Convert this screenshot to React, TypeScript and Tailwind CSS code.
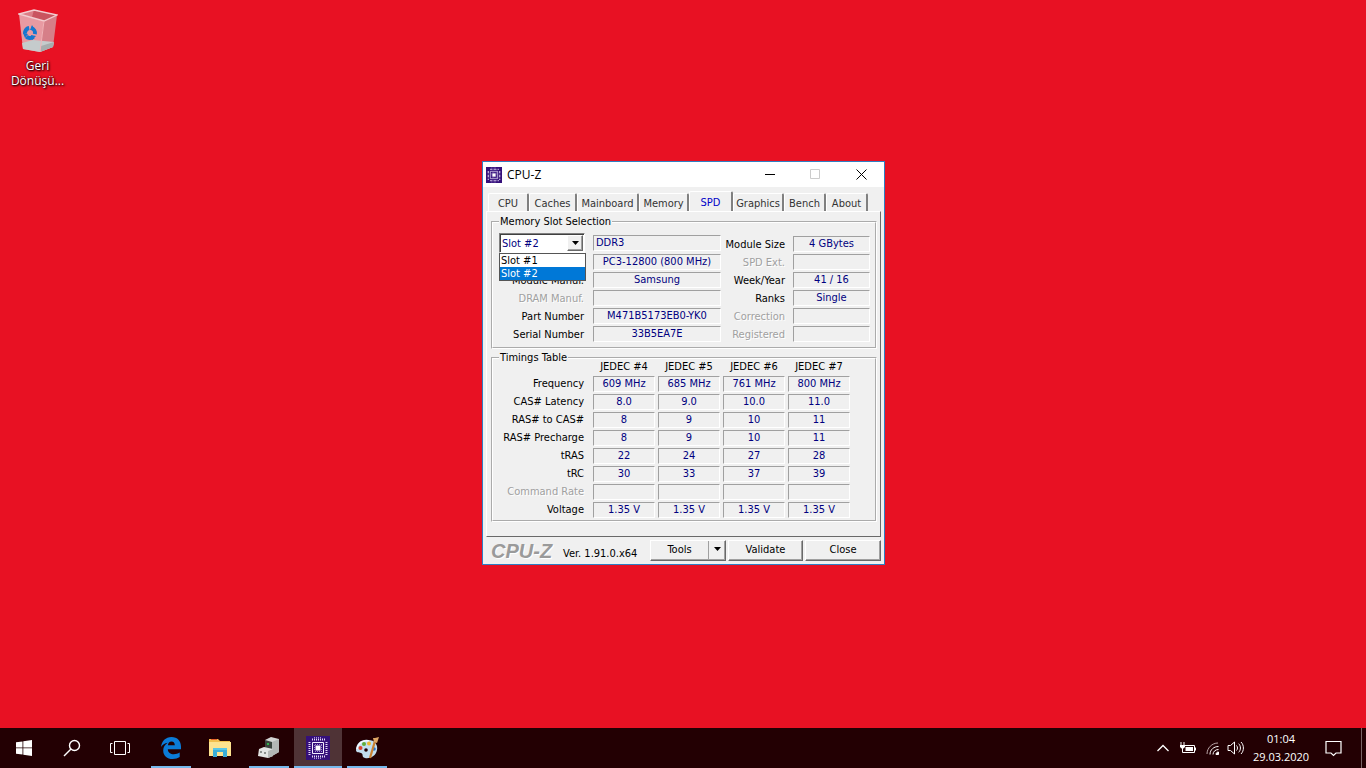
import { useState } from 'react';
import type { ReactNode } from 'react';
import clsx from 'clsx';

const TABS = [
  { name: 'CPU', width: 'w-[41px]' },
  { name: 'Caches', width: 'w-12' },
  { name: 'Mainboard', width: 'w-[62px]' },
  { name: 'Memory', width: 'w-[50px]' },
  { name: 'SPD', width: 'w-11' },
  { name: 'Graphics', width: 'w-[51px]' },
  { name: 'Bench', width: 'w-[42px]' },
  { name: 'About', width: 'w-[42px]' },
];

const SLOTS = ['Slot #1', 'Slot #2'];

const MODULE_ROWS = [
  { label: '', value: 'PC3-12800 (800 MHz)' },
  { label: 'Module Manuf.', value: 'Samsung' },
  { label: 'DRAM Manuf.', value: '' },
  { label: 'Part Number', value: 'M471B5173EB0-YK0' },
  { label: 'Serial Number', value: '33B5EA7E' },
];

const DETAIL_ROWS = [
  { label: 'Module Size', value: '4 GBytes' },
  { label: 'SPD Ext.', value: '' },
  { label: 'Week/Year', value: '41 / 16' },
  { label: 'Ranks', value: 'Single' },
  { label: 'Correction', value: '' },
  { label: 'Registered', value: '' },
];

const PROFILES = ['JEDEC #4', 'JEDEC #5', 'JEDEC #6', 'JEDEC #7'];

const TIMINGS = [
  { label: 'Frequency', values: ['609 MHz', '685 MHz', '761 MHz', '800 MHz'] },
  { label: 'CAS# Latency', values: ['8.0', '9.0', '10.0', '11.0'] },
  { label: 'RAS# to CAS#', values: ['8', '9', '10', '11'] },
  { label: 'RAS# Precharge', values: ['8', '9', '10', '11'] },
  { label: 'tRAS', values: ['22', '24', '27', '28'] },
  { label: 'tRC', values: ['30', '33', '37', '39'] },
  { label: 'Command Rate', values: ['', '', '', ''] },
  { label: 'Voltage', values: ['1.35 V', '1.35 V', '1.35 V', '1.35 V'] },
];

const sunken = 'border border-t-[#a0a0a0] border-l-[#a0a0a0] border-r-white border-b-white';
const raised =
  'border border-t-white border-l-white border-r-[#696969] border-b-[#696969] shadow-[inset_-1px_-1px_0_#a0a0a0]';

function ChipIcon({ size }: { size: number }) {
  return (
    <svg width={size} height={size} viewBox="0 0 24 24" aria-hidden="true">
      <rect width="24" height="24" fill="#35107a" />
      <path
        d="M6 3.500h13M6 20.500h13M3.500 6v13M20.500 6v13"
        stroke="#e6dcf8"
        strokeWidth="2"
        strokeDasharray="1 1"
      />
      <path d="M8 1.500h8M8 22.500h8" stroke="#a890d6" strokeDasharray="1 1" />
      <path d="M6.500 6.500h11v11h-11z" fill="none" stroke="#f4eeff" />
      <path d="M9 8.500h7M9 15.500h7M8.500 9v6M15.500 9v6" stroke="#9f86d0" strokeDasharray="1 1" />
      <path d="M9.500 9.500h5v5h-5z" fill="#fff" />
    </svg>
  );
}

function RecycleBin() {
  return (
    <svg width="40" height="44" viewBox="0 0 40 44" aria-hidden="true">
      <path d="M1 5 26 12l-4 31L5 40z" fill="#e89aa2" />
      <path d="M26 12 39 6l-4 32-13 5z" fill="#d67f88" />
      <path d="M1 5 16 1l23 5-13 6z" fill="#c9545f" />
      <path d="M16 1 14 8 1 5z" fill="#dc7d86" />
      <path d="m4 34 11-3 21 2-1 5-13 5-17-3z" fill="#c5cbcc" />
      <path d="m23 37 13-4-1 5-13 5z" fill="#a7acad" />
      <path d="M1 5 16 1l23 5-13 6z" fill="none" stroke="#f3cdd0" strokeWidth="1.3" />
      <path d="M26 12l-4 31" stroke="#efb4b9" />
      <circle
        cx="12"
        cy="24"
        r="5"
        fill="none"
        stroke="#1677cf"
        strokeWidth="4"
        strokeDasharray="7.5 2.972"
        transform="rotate(-75 12 24)"
      />
      <path d="m14 16 3 5h-5zM5 24l5 1-3 4zM18 27l-4 4-1-5z" fill="#1677cf" />
    </svg>
  );
}

function WindowsIcon() {
  return (
    <svg width="16" height="16" viewBox="0 0 16 16" fill="#fff" aria-hidden="true">
      <path d="M0 2.300 6.500 1.400v6.100H0zM7.300 1.300 16 0v7.500H7.300zM0 8.300h6.500v6.300L0 13.700zM7.300 8.300H16V16l-8.700-1.200z" />
    </svg>
  );
}

function SearchIcon() {
  return (
    <svg width="18" height="18" viewBox="0 0 18 18" fill="none" stroke="#fff" strokeWidth="1.4" aria-hidden="true">
      <circle cx="11.5" cy="6.5" r="5" />
      <path d="m8 10-7 7" />
    </svg>
  );
}

function TaskViewIcon() {
  return (
    <svg width="20" height="16" viewBox="0 0 20 16" fill="none" stroke="#fff" strokeWidth="1" aria-hidden="true">
      <path d="M4.500 1.500h11v13h-11zM2.500 3.500h-2v9h2M17.500 3.500h2v9h-2" />
    </svg>
  );
}

function EdgeIcon() {
  return (
    <svg width="20" height="22" viewBox="0 0 20 22" fill="#0b7bd8" aria-hidden="true">
      <path d="M0 10C.6 4.200 4.600 0 10.500 0 16.500 0 20 4.200 20 9.600v2.600H6.800c.2 3.300 2.700 5 6 5 2.300 0 4.100-.6 5.900-1.700v4.600C16.800 21.300 14.600 22 11.700 22 6.100 22 2.200 18.700 2.200 13.400c0-3.400 1.800-6 4.500-7.700C3.800 6.200 1.300 7.600 0 10zm6.900-1.700h6.900c0-2.300-1.100-3.700-3.300-3.700S7.200 6 6.900 8.300z" />
    </svg>
  );
}

function ExplorerIcon() {
  return (
    <svg width="22" height="20" viewBox="0 0 22 20" aria-hidden="true">
      <path d="M0 3V1h9l2 2h10v15H0z" fill="#f2bf4d" />
      <path d="M0 4h22v14H0z" fill="#fde38f" />
      <path d="M2 1.500h6" stroke="#e8622c" />
      <path d="M4 19v-9h14v9h-4v-5H8v5z" fill="#3aaed8" />
      <path d="M4 10h14v2H4z" fill="#58c6e6" />
    </svg>
  );
}

function DeviceIcon() {
  return (
    <svg width="24" height="22" viewBox="0 0 24 22" aria-hidden="true">
      <path d="m8 3 6-3 8 2v13l-7 4-7-3z" fill="#d2d4d3" />
      <path d="m15 5 7-3v13l-7 4z" fill="#b3b6b5" />
      <path d="m8 3 7 2v9l-7-1z" fill="#3a423d" />
      <path d="M10 6h2v2h-2z" fill="#2fb24a" />
      <path d="m2 12 5-2 9 2v7l-5 2-10-2z" fill="#e2e4e3" />
      <path d="m11 14 5-2v7l-5 2z" fill="#b4b7b6" />
      <path d="M3 14h2v2H3zM7 15h2v2H7z" fill="#8b8f8d" />
    </svg>
  );
}

function PaintIcon() {
  return (
    <svg width="24" height="24" viewBox="0 0 24 24" aria-hidden="true">
      <path d="M1 14C1 7 7 3 13 4c7 0 10 5 9 10-1 6-7 9-12 8-4-1-1-4-4-5-2-1-5 0-5-3z" fill="#c2def0" />
      <path d="M2 13C3 7 8 4 14 5" fill="none" stroke="#f4fbff" strokeWidth="1.5" />
      <circle cx="5.500" cy="12" r="2" fill="#d9442e" />
      <circle cx="9" cy="8" r="2" fill="#5fae3a" />
      <circle cx="14" cy="7.500" r="2" fill="#efb72c" />
      <circle cx="11" cy="14" r="1.800" fill="#230003" />
      <circle cx="19" cy="13" r="1.800" fill="#2c73c9" />
      <path d="m20 5-5 17" stroke="#c98132" strokeWidth="2.200" />
      <path d="m18 2 2 0 4-1-2 6-3-1z" fill="#dfa766" />
    </svg>
  );
}

function DesktopShortcut() {
  return (
    <button type="button" className="flex w-[75px] flex-col items-center pt-[9px] text-xs leading-[15px] text-white">
      <RecycleBin />
      <span className="mt-[5px] [text-shadow:1px_1px_2px_#000,0_0_2px_#000]">
        Geri
        <br />
        Dönüşü...
      </span>
    </button>
  );
}

function TitleBar() {
  return (
    <header className="flex h-[25px] items-center bg-white pl-[3px]">
      <ChipIcon size={16} />
      <h1 className="ml-[5px] flex-1 font-['Open_Sans',sans-serif] text-xs text-black">CPU-Z</h1>
      <button type="button" aria-label="Minimize" className="grid h-full w-[45px] place-items-center">
        <svg width="11" height="11" stroke="#000" aria-hidden="true">
          <path d="M0 5.500h10" />
        </svg>
      </button>
      <button type="button" aria-label="Maximize" disabled className="grid h-full w-[45px] place-items-center">
        <svg width="11" height="11" fill="none" stroke="#ccc" aria-hidden="true">
          <path d="M.500.500h9v9h-9z" />
        </svg>
      </button>
      <button type="button" aria-label="Close window" className="grid h-full w-[46px] place-items-center">
        <svg width="11" height="11" stroke="#000" aria-hidden="true">
          <path d="m.500.500 10 10m0-10-10 10" />
        </svg>
      </button>
    </header>
  );
}

function TabStrip() {
  return (
    <nav role="tablist" className="flex h-6 items-end pl-[5px]">
      {TABS.map(({ name, width }) => {
        const active = name === 'SPD';
        return (
          <button
            key={name}
            type="button"
            role="tab"
            aria-selected={active}
            className={clsx(
              width,
              'rounded-t-[2px] border-t border-r-2 border-l border-t-white border-r-[#808080] border-l-white pt-0.5 leading-[14px]',
              active ? 'h-5 text-[#0000c8]' : 'h-[18px] text-[#333]',
            )}
          >
            {name}
          </button>
        );
      })}
    </nav>
  );
}

function Group({ title, children }: { title: string; children: ReactNode }) {
  return (
    <fieldset className="min-w-0 border-2 border-white pr-[5px] pl-1.5 [border-style:groove]">
      <legend className="px-px leading-[14px]">{title}</legend>
      {children}
    </fieldset>
  );
}

function Field({ label, value }: { label: string; value: string }) {
  return (
    <>
      <dt className={clsx('pt-0.5 text-right leading-[14px]', !value && 'text-[#a0a0a0] [text-shadow:1px_1px_0_#fff]')}>
        {label}
      </dt>
      <dd className={clsx(sunken, 'h-4 text-center leading-[14px] text-[#000080]')}>{value}</dd>
    </>
  );
}

function SlotPicker() {
  const [slot, setSlot] = useState('Slot #2');

  return (
    <div className="relative h-5 w-[86px]">
      <select
        aria-label="Memory slot"
        value={slot}
        onChange={(e) => setSlot(e.target.value)}
        className="h-full w-full appearance-none border border-[#808080] border-r-white border-b-white bg-white pt-0.5 pl-0.5 leading-[14px] text-[#000080] shadow-[inset_1px_1px_0_#404040]"
      >
        {SLOTS.map((s) => (
          <option key={s}>{s}</option>
        ))}
      </select>
      <span className={clsx(raised, 'pointer-events-none absolute top-0.5 right-0.5 grid h-4 w-4 place-items-center bg-[#f0f0f0]')}>
        <svg width="7" height="4" aria-hidden="true">
          <path d="M0 0h7L3.500 4z" />
        </svg>
      </span>
      <ul role="listbox" className="absolute top-full left-0 z-10 w-[87px] border border-[#555] bg-white">
        {SLOTS.map((s) => (
          <li
            key={s}
            role="option"
            aria-selected={s === slot}
            onClick={() => setSlot(s)}
            className={clsx('pl-px leading-[13px]', s === slot ? 'bg-[#0078d7] text-white' : 'text-black')}
          >
            {s}
          </li>
        ))}
      </ul>
    </div>
  );
}

function SlotGroup() {
  return (
    <Group title="Memory Slot Selection">
      <div className="flex h-[118px] items-start justify-between pt-1">
        <div>
          <div className="flex h-[21px] gap-2">
            <SlotPicker />
            <output className={clsx(sunken, 'mt-0.5 h-4 flex-1 pl-0.5 leading-[14px] text-[#000080]')}>DDR3</output>
          </div>
          <dl className="grid grid-cols-[85px_128px] gap-x-[9px] gap-y-0.5">
            {MODULE_ROWS.map((row) => (
              <Field key={row.value + row.label} {...row} />
            ))}
          </dl>
        </div>
        <dl className="mt-[3px] grid grid-cols-[60px_77px] gap-x-2 gap-y-0.5">
          {DETAIL_ROWS.map((row) => (
            <Field key={row.label} {...row} />
          ))}
        </dl>
      </div>
    </Group>
  );
}

function TimingsGroup() {
  return (
    <Group title="Timings Table">
      <table className="-mt-[7px] table-fixed border-separate border-spacing-x-[3px] border-spacing-y-[2px] leading-[14px]">
        <thead>
          <tr>
            <td className="w-[88px] p-0" />
            {PROFILES.map((p) => (
              <th key={p} scope="col" className="w-[62px] p-0 font-normal">
                {p}
              </th>
            ))}
          </tr>
        </thead>
        <tbody>
          {TIMINGS.map(({ label, values }) => (
            <tr key={label}>
              <th
                scope="row"
                className={clsx(
                  'p-0 pr-1.5 text-right font-normal',
                  !values[0] && 'text-[#a0a0a0] [text-shadow:1px_1px_0_#fff]',
                )}
              >
                {label}
              </th>
              {values.map((v, i) => (
                <td key={i} className={clsx(sunken, 'h-4 p-0 text-center text-[#000080]')}>
                  {v}
                </td>
              ))}
            </tr>
          ))}
        </tbody>
      </table>
    </Group>
  );
}

function WindowFooter() {
  return (
    <footer className="flex h-[27px] items-center pr-[3px] pl-2">
      <span className="w-[72px] font-['Liberation_Sans',Arial,sans-serif] text-xl font-bold text-[#9a9a9a] italic [text-shadow:1px_1px_0_#fff]">
        CPU-Z
      </span>
      <span className="flex-1 pt-2">Ver. 1.91.0.x64</span>
      <div className="flex gap-0.5">
        <div className={clsx(raised, 'flex h-[21px] w-[76px]')}>
          <button type="button" className="flex-1 border-r border-[#a0a0a0]">
            Tools
          </button>
          <button type="button" aria-label="More tools" className="grid w-4 place-items-center pb-1">
            <svg width="7" height="4" aria-hidden="true">
              <path d="M0 0h7L3.500 4z" />
            </svg>
          </button>
        </div>
        <button type="button" className={clsx(raised, 'h-[21px] w-[75px]')}>
          Validate
        </button>
        <button type="button" className={clsx(raised, 'h-[21px] w-[76px]')}>
          Close
        </button>
      </div>
    </footer>
  );
}

function CpuzWindow() {
  return (
    <section className="w-[403px] border border-[#2f7fc4] bg-[#f0f0f0] font-['DejaVu_Sans_Condensed','DejaVu_Sans',Tahoma,sans-serif] text-[11px] text-black">
      <TitleBar />
      <TabStrip />
      <div className="mx-[3px] border border-t-white border-r-[#696969] border-b-[#696969] border-l-white pt-[3px] pr-[3px] pb-3.5 pl-1">
        <SlotGroup />
        <div className="h-0.5" />
        <TimingsGroup />
      </div>
      <WindowFooter />
    </section>
  );
}

function TaskButton({ label, state, children }: { label: string; state?: 'open' | 'active'; children: ReactNode }) {
  return (
    <button
      type="button"
      aria-label={label}
      className={clsx('relative grid h-full w-12 place-items-center', state === 'active' && 'bg-[#4f3336]')}
    >
      {children}
      {state && (
        <span
          className={clsx('absolute bottom-0 h-0.5 bg-[#76b9ed]', state === 'active' ? 'inset-x-0' : 'inset-x-1')}
        />
      )}
    </button>
  );
}

function Tray() {
  return (
    <div className="ml-auto flex h-full items-center text-white">
      <svg width="12" height="8" fill="none" stroke="#fff" strokeWidth="1.300" aria-hidden="true">
        <path d="m.500 7 5.500-5.500L11.500 7" />
      </svg>
      <svg className="ml-2.5" width="17" height="13" fill="none" stroke="#fff" aria-hidden="true">
        <path d="M5 3.500h10.500v7H5M16.500 5.500v3M2 0v3M5 0v3M3.500 6v4.500H6" />
        <path d="M1 3h5v2L4.500 6.500h-2L1 5z" fill="#fff" stroke="none" />
        <path d="M6.500 5H14v4H6.500z" fill="#fff" stroke="none" />
      </svg>
      <svg className="ml-2.5" width="13" height="13" fill="none" stroke="#fff" aria-hidden="true">
        <path d="M1 12C1 6 6 1 12 1" stroke="#b9a5a7" />
        <path d="M4 12.500c0-5 4-8 8.500-8M7 12.500c0-3 2.500-5 5.500-5" />
        <path d="M10 12.500c0-1.500 1-2.500 2.500-2.500v2.500z" fill="#fff" />
      </svg>
      <svg className="ml-2" width="18" height="14" fill="none" stroke="#fff" aria-hidden="true">
        <path d="M1 4.500h2.500l4-3.500v12l-4-3.500H1z" />
        <path d="M9.500 4.500c1.300 1.300 1.300 3.700 0 5M11.700 2.700c2.300 2.300 2.300 6.300 0 8.600M14 1c3.200 3.200 3.200 8.800 0 12" />
      </svg>
      <time className="ml-2 w-[56px] text-center font-['Open_Sans',sans-serif] text-[11px] leading-[18px]">
        01:04
        <br />
        29.03.2020
      </time>
      <button type="button" aria-label="Action center" className="ml-[15px] grid h-full w-[18px] place-items-center">
        <svg width="17" height="17" fill="none" stroke="#fff" strokeWidth="1.200" aria-hidden="true">
          <path d="M1 1.500h15v11.500h-5L8.500 15.500 6 13H1z" />
        </svg>
      </button>
      <button
        type="button"
        aria-label="Show desktop"
        className="ml-[19px] h-full w-[5px] border-l border-[#7a6466]"
      />
    </div>
  );
}

function Taskbar() {
  return (
    <footer className="flex h-10 items-center bg-[#230003]">
      <TaskButton label="Start"><WindowsIcon /></TaskButton>
      <TaskButton label="Search"><SearchIcon /></TaskButton>
      <TaskButton label="Task view"><TaskViewIcon /></TaskButton>
      <div className="ml-[3px] flex h-full gap-px">
        <TaskButton label="Edge" state="open"><EdgeIcon /></TaskButton>
        <TaskButton label="File Explorer"><ExplorerIcon /></TaskButton>
        <TaskButton label="Devices" state="open"><DeviceIcon /></TaskButton>
        <TaskButton label="CPU-Z" state="active"><ChipIcon size={24} /></TaskButton>
        <TaskButton label="Paint" state="open"><PaintIcon /></TaskButton>
      </div>
      <Tray />
    </footer>
  );
}

export default function App() {
  return (
    <div className="flex h-screen flex-col bg-[#e81123] font-['Open_Sans',sans-serif]">
      <main className="relative grid flex-1 place-items-center pb-0.5 pl-px">
        <div className="absolute top-0 left-0">
          <DesktopShortcut />
        </div>
        <CpuzWindow />
      </main>
      <Taskbar />
    </div>
  );
}
